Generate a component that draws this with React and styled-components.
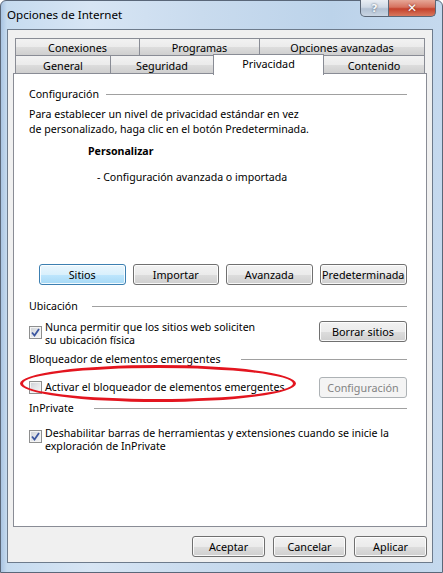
import React from "react";
import styled, { createGlobalStyle, css } from "styled-components";

const GlobalStyle = createGlobalStyle`
  html, body {
    margin: 0;
    padding: 0;
    background: #ffffff;
  }
  body {
    font-family: "Segoe UI", "Noto Sans", "Open Sans", sans-serif;
    font-size: 10.6px;
    color: #000000;
  }
`;

const Window = styled.div`
  width: 443px;
  height: 573px;
  box-sizing: border-box;
  display: flex;
  flex-direction: column;
  border: 1px solid #5a6779;
  border-radius: 6px 6px 0 0;
  background: linear-gradient(
    to right,
    #a9c4e2 0px,
    #c6dbef 6px,
    #d7e5f4 90px,
    #c9dbee 200px,
    #bcd3ea 330px,
    #c5d9ee 440px
  );
`;

const TitleBar = styled.div`
  height: 28px;
  display: flex;
  justify-content: space-between;
  align-items: flex-start;
  padding-left: 6px;
  padding-right: 6px;
`;

const Title = styled.div`
  line-height: 28px;
  font-size: 11.6px;
  color: #000000;
`;

const CaptionButtons = styled.div`
  display: flex;
  margin-top: -1px;
`;

const CaptionButton = styled.div`
  height: 17px;
  box-sizing: border-box;
  border: 1px solid #5b6777;
  border-top: none;
  display: flex;
  align-items: center;
  justify-content: center;
  color: #ffffff;
  font-weight: bold;
  font-family: "DejaVu Sans", sans-serif;
  ${(p) =>
    p.$close
      ? css`
          width: 47px;
          border-left: none;
          border-radius: 0 0 5px 0;
          background: linear-gradient(#e6a797 0%, #d6725f 45%, #c4412c 55%, #d8785e 100%);
          font-size: 12px;
          text-shadow: 0 0 2px #6a1b10;
        `
      : css`
          width: 29px;
          border-radius: 0 0 0 5px;
          background: linear-gradient(#e9eef4 0%, #cfd9e5 45%, #b2c1d3 55%, #c9d5e3 100%);
          font-size: 11px;
          color: #f4f6f9;
          text-shadow: 0 0 2px #3c4b5e;
        `}
`;

const Client = styled.div`
  flex: 1;
  margin: 0 9px 9px 6px;
  background: #f0f0f0;
  border: 1px solid #6d7b8c;
  display: flex;
  flex-direction: column;
`;

const TabStrip = styled.div`
  padding: 8px 0 0 7px;
  display: flex;
  flex-direction: column;
`;

const TabRow = styled.div`
  display: flex;
  height: ${(p) => p.$h}px;
  align-items: flex-end;
`;

const Tab = styled.div`
  width: ${(p) => p.$w}px;
  box-sizing: border-box;
  height: ${(p) => (p.$active ? 21 : p.$h || 18)}px;
  margin-right: -1px;
  border: 1px solid #898c95;
  border-bottom: none;
  display: flex;
  justify-content: center;
  align-items: center;
  font-size: 10.8px;
  line-height: 15px;
  position: relative;
  ${(p) =>
    p.$active
      ? css`
          background: #ffffff;
          z-index: 2;
          margin-bottom: -2px;
          padding-bottom: 4px;
        `
      : css`
          background: linear-gradient(#f2f2f2 0%, #ebebeb 50%, #dddddd 51%, #cfcfcf 100%);
          padding-top: 1px;
        `}
`;

const Panel = styled.div`
  position: relative;
  margin: 0 5px 0 5px;
  height: 454px;
  box-sizing: border-box;
  background: #ffffff;
  border: 1px solid #898c95;
  padding: 13px 19px 0 15px;
  display: flex;
  flex-direction: column;
  line-height: 15px;
`;

const SectionHeader = styled.div`
  display: flex;
  align-items: center;
  margin-top: ${(p) => p.$top || 0}px;
  &::after {
    content: "";
    flex: 1;
    height: 1px;
    background: #a0a0a0;
    margin-left: ${(p) => p.$gap}px;
  }
`;

const Paragraph = styled.div`
  margin-top: ${(p) => p.$top || 0}px;
  padding-left: ${(p) => p.$indent || 0}px;
  font-weight: ${(p) => (p.$bold ? "bold" : "normal")};
`;

const ButtonRow = styled.div`
  display: flex;
  gap: 7px;
  margin-top: ${(p) => p.$top}px;
  padding-left: ${(p) => p.$indent || 0}px;
`;

const Button = styled.div`
  width: ${(p) => p.$w}px;
  height: 21px;
  box-sizing: border-box;
  border: 1px solid #707070;
  border-radius: 3px;
  display: flex;
  align-items: center;
  justify-content: center;
  font-size: 10.8px;
  white-space: nowrap;
  box-shadow: inset 0 0 0 1px rgba(255, 255, 255, 0.85);
  background: linear-gradient(#f2f2f2 0%, #ebebeb 50%, #dddddd 51%, #cfcfcf 100%);
  ${(p) =>
    p.$focused &&
    css`
      border-color: #3c7fb1;
      background: linear-gradient(#eaf6fd 0%, #d9f0fc 50%, #bee6fd 51%, #a7d9f5 100%);
    `}
  ${(p) =>
    p.$disabled &&
    css`
      border-color: #adb2b5;
      background: #f4f4f4;
      color: #838383;
      box-shadow: none;
    `}
`;

const OptionRow = styled.div`
  display: flex;
  justify-content: space-between;
  align-items: ${(p) => p.$align || "flex-start"};
  margin-top: ${(p) => p.$top}px;
`;

const CheckLabel = styled.div`
  display: flex;
  align-items: ${(p) => p.$align || "flex-start"};
  line-height: 13px;
  white-space: nowrap;
`;

const Box = styled.div`
  width: 13px;
  height: 13px;
  flex: none;
  box-sizing: border-box;
  border: 1px solid #8e8f8f;
  margin-top: ${(p) => p.$top || 0}px;
  margin-right: 3px;
  background: linear-gradient(135deg, #cbcfd5 0%, #e4e6e9 50%, #f6f6f6 100%);
  box-shadow: inset 0 0 0 1px #f4f4f4;
  display: flex;
  align-items: center;
  justify-content: center;
`;

const Highlight = styled.div`
  position: absolute;
  left: 6px;
  top: 291px;
  width: 276px;
  height: 37px;
  box-sizing: border-box;
  border: 3px solid #e3151f;
  border-radius: 50%;
  pointer-events: none;
`;

const Footer = styled.div`
  display: flex;
  justify-content: flex-end;
  gap: 8px;
  padding: 9px 5px 0 0;
`;

const Check = () => (
  <svg width="9" height="9" viewBox="0 0 9 9">
    <path d="M1 4.5 L3.5 7.5 L8 1" fill="none" stroke="#3b56a0" strokeWidth="1.8" />
  </svg>
);

const Checkbox = ({ checked, top }) => <Box $top={top}>{checked && <Check />}</Box>;

export default function App() {
  return (
    <>
      <GlobalStyle />
      <Window>
        <TitleBar>
          <Title>Opciones de Internet</Title>
          <CaptionButtons>
            <CaptionButton>?</CaptionButton>
            <CaptionButton $close>✕</CaptionButton>
          </CaptionButtons>
        </TitleBar>
        <Client>
          <TabStrip>
            <TabRow $h={17}>
              <Tab $w={125} $h={17}>Conexiones</Tab>
              <Tab $w={121} $h={17}>Programas</Tab>
              <Tab $w={166} $h={17}>Opciones avanzadas</Tab>
            </TabRow>
            <TabRow $h={18}>
              <Tab $w={96}>General</Tab>
              <Tab $w={104}>Seguridad</Tab>
              <Tab $w={111} $active>
                Privacidad
              </Tab>
              <Tab $w={102}>Contenido</Tab>
            </TabRow>
          </TabStrip>
          <Panel>
            <SectionHeader $gap={7}>Configuración</SectionHeader>
            <Paragraph $top={5}>
              Para establecer un nivel de privacidad estándar en vez
              <br />
              de personalizado, haga clic en el botón Predeterminada.
            </Paragraph>
            <Paragraph $top={7} $indent={59} $bold>
              Personalizar
            </Paragraph>
            <Paragraph $top={11} $indent={68}>
              - Configuración avanzada o importada
            </Paragraph>
            <ButtonRow $top={79} $indent={10}>
              <Button $w={87} $focused>
                Sitios
              </Button>
              <Button $w={87}>Importar</Button>
              <Button $w={87}>Avanzada</Button>
              <Button $w={88}>Predeterminada</Button>
            </ButtonRow>
            <SectionHeader $top={14} $gap={14}>
              Ubicación
            </SectionHeader>
            <OptionRow $top={7}>
              <CheckLabel>
                <Checkbox checked top={5} />
                <span>
                  Nunca permitir que los sitios web soliciten
                  <br />
                  su ubicación física
                </span>
              </CheckLabel>
              <Button $w={88}>Borrar sitios</Button>
            </OptionRow>
            <SectionHeader $top={5} $gap={20}>
              Bloqueador de elementos emergentes
            </SectionHeader>
            <OptionRow $top={10} $align="center">
              <CheckLabel $align="center">
                <Checkbox />
                <span>Activar el bloqueador de elementos emergentes</span>
              </CheckLabel>
              <Button $w={88} $disabled>
                Configuración
              </Button>
            </OptionRow>
            <SectionHeader $top={3} $gap={20}>
              InPrivate
            </SectionHeader>
            <OptionRow $top={11}>
              <CheckLabel>
                <Checkbox checked top={3} />
                <span>
                  Deshabilitar barras de herramientas y extensiones cuando se inicie la
                  <br />
                  exploración de InPrivate
                </span>
              </CheckLabel>
            </OptionRow>
            <Highlight />
          </Panel>
          <Footer>
            <Button $w={73}>Aceptar</Button>
            <Button $w={73}>Cancelar</Button>
            <Button $w={73}>Aplicar</Button>
          </Footer>
        </Client>
      </Window>
    </>
  );
}
